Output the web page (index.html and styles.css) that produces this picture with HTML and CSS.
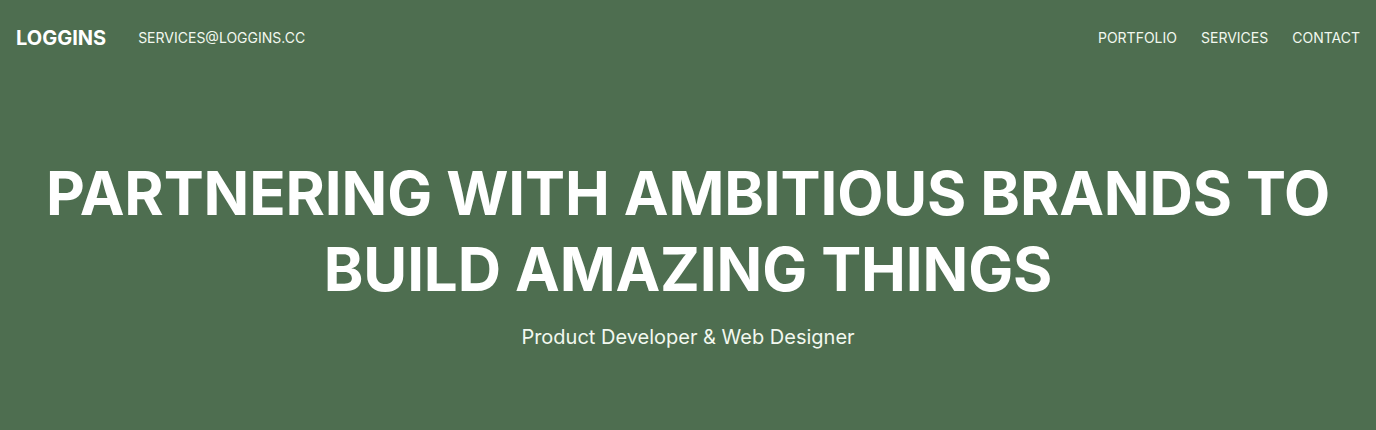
FILE: index.html
```html
<!DOCTYPE html>
<html lang="en">
<head>
<meta charset="utf-8">
<title>Loggins</title>
<link rel="stylesheet" href="styles.css">
</head>
<body>
<div class="page">
  <header class="topbar">
    <div class="left">
      <a class="logo" href="#">LOGGINS</a>
      <a class="email" href="#">SERVICES@LOGGINS.CC</a>
    </div>
    <nav class="nav">
      <a href="#">PORTFOLIO</a>
      <a href="#">SERVICES</a>
      <a href="#">CONTACT</a>
    </nav>
  </header>
  <section class="hero">
    <h1>PARTNERING WITH AMBITIOUS BRANDS TO BUILD AMAZING THINGS</h1>
    <p>Product Developer &amp; Web Designer</p>
  </section>
</div>
</body>
</html>
```
FILE: styles.css
```css
html, body {
  margin: 0;
  padding: 0;
}
body {
  background: #4e6e50;
  font-family: Inter, "Noto Sans", sans-serif;
  color: #f2f8ef;
  height: 430px;
  overflow: hidden;
}
a {
  color: inherit;
  text-decoration: none;
}
.topbar {
  display: flex;
  justify-content: space-between;
  align-items: center;
  padding: 25px 16px 0 16px;
  height: 24px;
}
.left {
  display: flex;
  align-items: center;
  gap: 32px;
}
.logo {
  font-weight: 700;
  font-size: 20px;
  color: #ffffff;
  padding-top: 2px;
}
.email {
  font-size: 14px;
}
.nav {
  display: flex;
  gap: 24px;
  font-size: 14px;
}
.hero {
  text-align: center;
  padding-top: 106px;
}
.hero h1 {
  margin: 0 auto;
  font-size: 60px;
  font-weight: 700;
  line-height: 76px;
  letter-spacing: -0.12px;
  color: #ffffff;
  max-width: 1330px;
}
.hero p {
  margin: 18px 0 0;
  font-size: 20px;
}
```
